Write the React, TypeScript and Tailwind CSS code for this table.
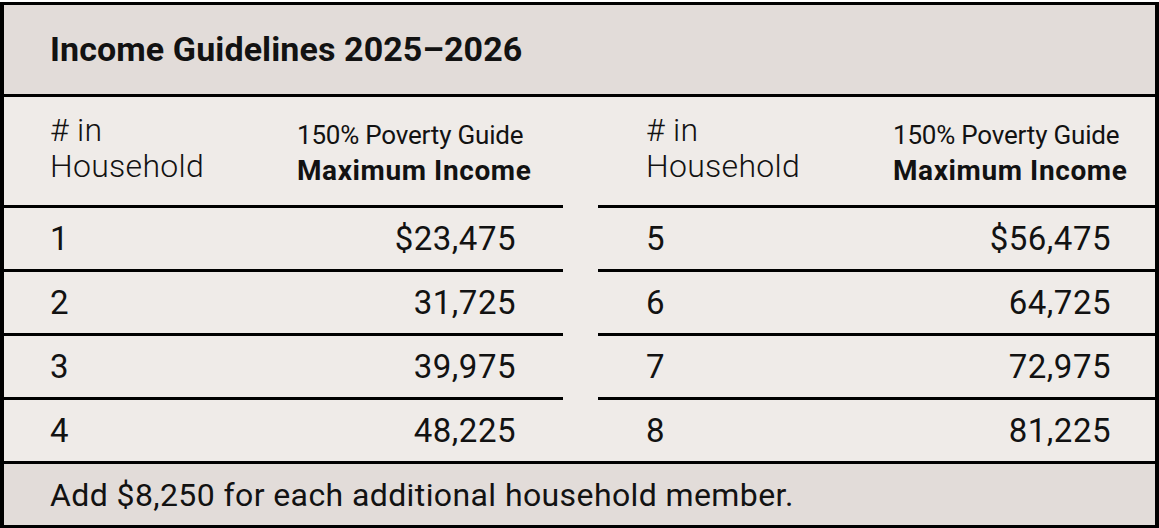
import React from "react";

const left = [
  ["1", "$23,475"],
  ["2", "31,725"],
  ["3", "39,975"],
  ["4", "48,225"],
];
const right = [
  ["5", "$56,475"],
  ["6", "64,725"],
  ["7", "72,975"],
  ["8", "81,225"],
];

function Half({ rows, side }: { rows: string[][]; side: "l" | "r" }) {
  const pad = side === "l" ? "pl-[46px] pr-[47px]" : "pl-[48px] pr-[44px]";
  return (
    <div className="flex flex-col">
      <div className={`h-[108px] flex items-start ${pad}`}>
        <div className="w-[247px] shrink-0 pt-[15px] text-[32px] leading-[36px] font-light tracking-[0.3px]">
          <div># in</div>
          <div>Household</div>
        </div>
        <div className="pt-[20px] leading-[36px] whitespace-nowrap">
          <div className="text-[26px] tracking-[-0.2px]">150% Poverty Guide</div>
          <div className="text-[28px] font-bold tracking-[0.6px]">Maximum Income</div>
        </div>
      </div>
      {rows.map(([n, v]) => (
        <div
          key={n}
          className={`h-[64px] border-t-[3px] border-black flex items-center justify-between text-[33px] tracking-[0.5px] ${pad}`}
        >
          <span>{n}</span>
          <span>{v}</span>
        </div>
      ))}
    </div>
  );
}

export default function App() {
  return (
    <div className="w-[1159px] h-[528px] bg-white pt-[2px] font-['Roboto','Liberation_Sans',sans-serif] text-[#121212]">
      <div className="border-x-4 border-y-[3px] border-black flex flex-col">
        <div className="h-[89px] bg-[#e2dcd9] flex items-center pl-[46px] text-[34px] font-bold tracking-[0.1px]">
          Income Guidelines 2025–2026
        </div>
        <div className="h-[3px] bg-black" />
        <div className="bg-[#efebe8] grid grid-cols-[559px_557px] gap-x-[35px]">
          <Half rows={left} side="l" />
          <Half rows={right} side="r" />
        </div>
        <div className="h-[3px] bg-black" />
        <div className="h-[61px] bg-[#e2dcd9] flex items-center pl-[46px] text-[32px] tracking-[0.4px]">
          Add $8,250 for each additional household member.
        </div>
      </div>
    </div>
  );
}
